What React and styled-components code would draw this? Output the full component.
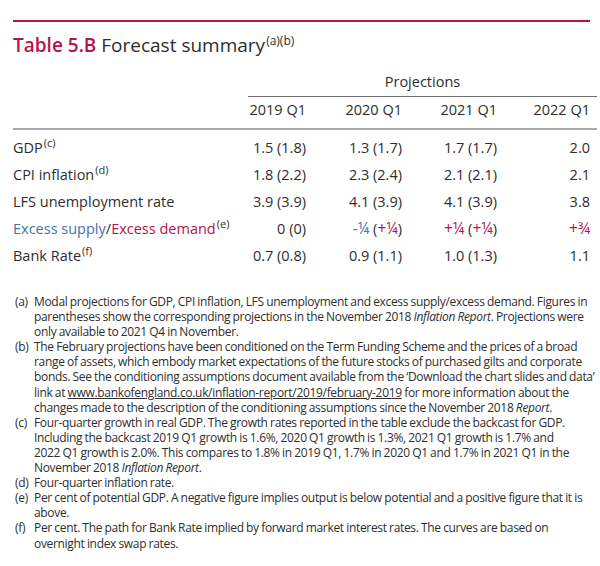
import styled, { createGlobalStyle } from "styled-components";

const GlobalStyle = createGlobalStyle`
  body {
    margin: 0;
    background: #fff;
  }
`;

const CRIMSON = "#b5134d";
const BLUE = "#4275ab";
const TEXT = "#2e2e2e";

const Page = styled.div`
  width: 600px;
  height: 566px;
  box-sizing: border-box;
  padding: 20px 3px 0 13px;
  font-family: "Open Sans", "Liberation Sans", sans-serif;
  color: ${TEXT};
  background: #fff;
`;

const TopRule = styled.div`
  width: 577px;
  height: 2px;
  background: ${CRIMSON};
`;

const Title = styled.h1`
  margin: 0;
  padding-top: 10px;
  height: 28px;
  font-size: 19px;
  line-height: 26px;
  font-weight: 400;
  color: ${TEXT};
  white-space: nowrap;
`;

const TitleNo = styled.span`
  font-weight: 600;
  color: ${CRIMSON};
`;

const Sup = styled.sup`
  font-size: ${(p) => p.$size || 11}px;
  line-height: 0;
  vertical-align: ${(p) => p.$raise || 6}px;
  margin-left: 1px;
`;

const Table = styled.div`
  margin-top: 9px;
  display: grid;
  grid-template-columns: 235px 65px 96px 95px 93px;
  font-size: 14.5px;
`;

const Projections = styled.div`
  grid-column: 2 / 6;
  text-align: center;
  height: 27px;
  line-height: 25px;
  border-bottom: 1px solid #6e6e6e;
`;

const HeadCell = styled.div`
  height: 31px;
  line-height: 26px;
  text-align: right;
  padding-right: 7px;
  border-bottom: 2px solid #a9a9a9;
  white-space: nowrap;
`;

const Label = styled.div`
  height: 27px;
  line-height: 27px;
  white-space: nowrap;
`;

const Value = styled.div`
  height: 27px;
  line-height: 27px;
  text-align: right;
  padding-right: 7px;
  white-space: nowrap;
`;

const Tone = styled.span`
  color: ${(p) => (p.$tone === "blue" ? BLUE : CRIMSON)};
`;

const Frac = styled.span`
  font-size: 15.5px;
  color: ${(p) => (p.$tone === "blue" ? BLUE : CRIMSON)};
`;

const Spacer = styled.div`
  grid-column: 1 / 6;
  height: 4px;
`;

const Notes = styled.ol`
  list-style: none;
  margin: 25px 0 0 2px;
  padding: 0;
  width: 576px;
  font-size: 12px;
  line-height: 15.1px;
  letter-spacing: -0.32px;
  word-spacing: -0.4px;
`;

const Note = styled.li`
  display: grid;
  grid-template-columns: 19px 1fr;
  white-space: nowrap;
`;

const Link = styled.span`
  text-decoration: underline;
`;

const rows = [
  { label: "GDP", sup: "(c)", values: ["1.5 (1.8)", "1.3 (1.7)", "1.7 (1.7)", "2.0"] },
  { label: "CPI inflation", sup: "(d)", values: ["1.8 (2.2)", "2.3 (2.4)", "2.1 (2.1)", "2.1"] },
  { label: "LFS unemployment rate", values: ["3.9 (3.9)", "4.1 (3.9)", "4.1 (3.9)", "3.8"] },
];

function App() {
  return (
    <Page>
      <GlobalStyle />
      <TopRule />
      <Title>
        <TitleNo>Table 5.B</TitleNo> Forecast summary
        <Sup $size={12} $raise={7}>(a)(b)</Sup>
      </Title>

      <Table>
        <div />
        <Projections>Projections</Projections>
        <HeadCell />
        <HeadCell>2019 Q1</HeadCell>
        <HeadCell>2020 Q1</HeadCell>
        <HeadCell>2021 Q1</HeadCell>
        <HeadCell>2022 Q1</HeadCell>
        <Spacer />

        {rows.map((r) => [
          <Label key={r.label}>
            {r.label}
            {r.sup && <Sup>{r.sup}</Sup>}
          </Label>,
          ...r.values.map((v, i) => <Value key={r.label + i}>{v}</Value>),
        ])}

        <Label>
          <Tone $tone="blue">Excess supply</Tone>/<Tone>Excess demand</Tone>
          <Sup>(e)</Sup>
        </Label>
        <Value>0 (0)</Value>
        <Value>
          <Frac $tone="blue">-¼</Frac> (<Frac>+¼</Frac>)
        </Value>
        <Value>
          <Frac>+¼</Frac> (<Frac>+¼</Frac>)
        </Value>
        <Value>
          <Frac>+¾</Frac>
        </Value>

        <Label>
          Bank Rate<Sup>(f)</Sup>
        </Label>
        <Value>0.7 (0.8)</Value>
        <Value>0.9 (1.1)</Value>
        <Value>1.0 (1.3)</Value>
        <Value>1.1</Value>
      </Table>

      <Notes>
        <Note>
          <span>(a)</span>
          <span>
            Modal projections for GDP, CPI inflation, LFS unemployment and excess supply/excess demand. Figures in
            <br />
            parentheses show the corresponding projections in the November 2018 <i>Inflation Report</i>. Projections were
            <br />
            only available to 2021 Q4 in November.
          </span>
        </Note>
        <Note>
          <span>(b)</span>
          <span>
            The February projections have been conditioned on the Term Funding Scheme and the prices of a broad
            <br />
            range of assets, which embody market expectations of the future stocks of purchased gilts and corporate
            <br />
            bonds. See the conditioning assumptions document available from the ‘Download the chart slides and data’
            <br />
            link at <Link>www.bankofengland.co.uk/inflation-report/2019/february-2019</Link> for more information about the
            <br />
            changes made to the description of the conditioning assumptions since the November 2018 <i>Report</i>.
          </span>
        </Note>
        <Note>
          <span>(c)</span>
          <span>
            Four-quarter growth in real GDP. The growth rates reported in the table exclude the backcast for GDP.
            <br />
            Including the backcast 2019 Q1 growth is 1.6%, 2020 Q1 growth is 1.3%, 2021 Q1 growth is 1.7% and
            <br />
            2022 Q1 growth is 2.0%. This compares to 1.8% in 2019 Q1, 1.7% in 2020 Q1 and 1.7% in 2021 Q1 in the
            <br />
            November 2018 <i>Inflation Report</i>.
          </span>
        </Note>
        <Note>
          <span>(d)</span>
          <span>Four-quarter inflation rate.</span>
        </Note>
        <Note>
          <span>(e)</span>
          <span>
            Per cent of potential GDP. A negative figure implies output is below potential and a positive figure that it is
            <br />
            above.
          </span>
        </Note>
        <Note>
          <span>(f)</span>
          <span>
            Per cent. The path for Bank Rate implied by forward market interest rates. The curves are based on
            <br />
            overnight index swap rates.
          </span>
        </Note>
      </Notes>
    </Page>
  );
}

export default App;
